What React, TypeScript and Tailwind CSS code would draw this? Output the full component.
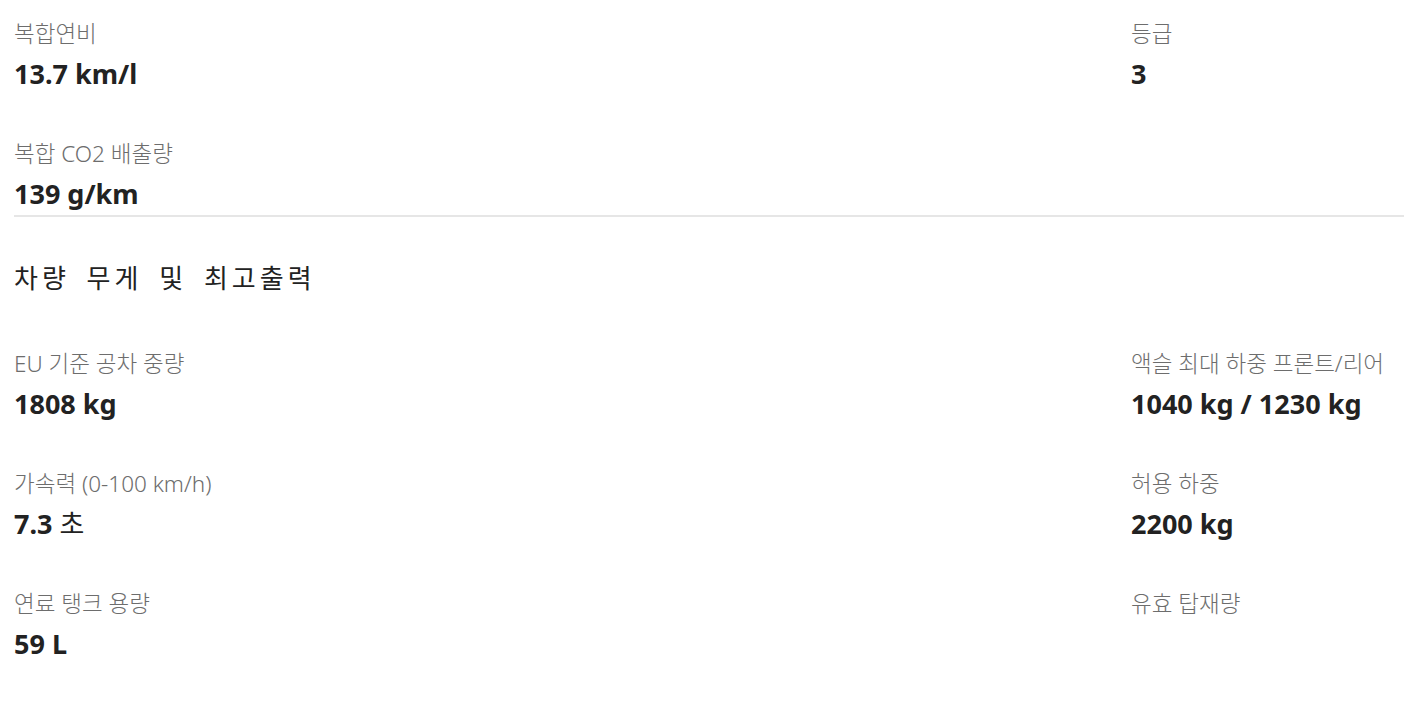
import React from "react";

const font = { fontFamily: '"Noto Sans", "Noto Sans CJK KR", sans-serif' };

function Item({ label, value, unit }: { label: string; value?: string; unit?: string }) {
  return (
    <div className="flex flex-col h-[120px] pt-[18px]">
      <div className="text-[22.5px] leading-[32px] font-light text-[#6d6d6d]">{label}</div>
      {value !== undefined && (
        <div className="mt-[7px] text-[27px] leading-[34px] font-bold text-[#222222]">
          {value}
          {unit && <span className="font-normal"> {unit}</span>}
        </div>
      )}
    </div>
  );
}

export default function App() {
  return (
    <div className="w-[1404px] h-[720px] bg-white pl-[14px]" style={font}>
      <div className="grid grid-cols-[1117px_1fr]">
        <div>
          <Item label="복합연비" value="13.7 km/l" />
          <Item label="복합 CO2 배출량" value="139 g/km" />
        </div>
        <div>
          <Item label="등급" value="3" />
        </div>
      </div>
      <div className="-mt-[25px] h-[2px] bg-[#e6e6e6]" />
      <div className="pt-[43px] text-[26px] leading-[36px] text-[#222222] tracking-[4px] [word-spacing:6px]">
        차량 무게 및 최고출력
      </div>
      <div className="grid grid-cols-[1117px_1fr] mt-[34px]">
        <div>
          <Item label="EU 기준 공차 중량" value="1808 kg" />
          <Item label="가속력 (0-100 km/h)" value="7.3" unit="초" />
          <Item label="연료 탱크 용량" value="59 L" />
        </div>
        <div>
          <Item label="액슬 최대 하중 프론트/리어" value="1040 kg / 1230 kg" />
          <Item label="허용 하중" value="2200 kg" />
          <Item label="유효 탑재량" />
        </div>
      </div>
    </div>
  );
}
